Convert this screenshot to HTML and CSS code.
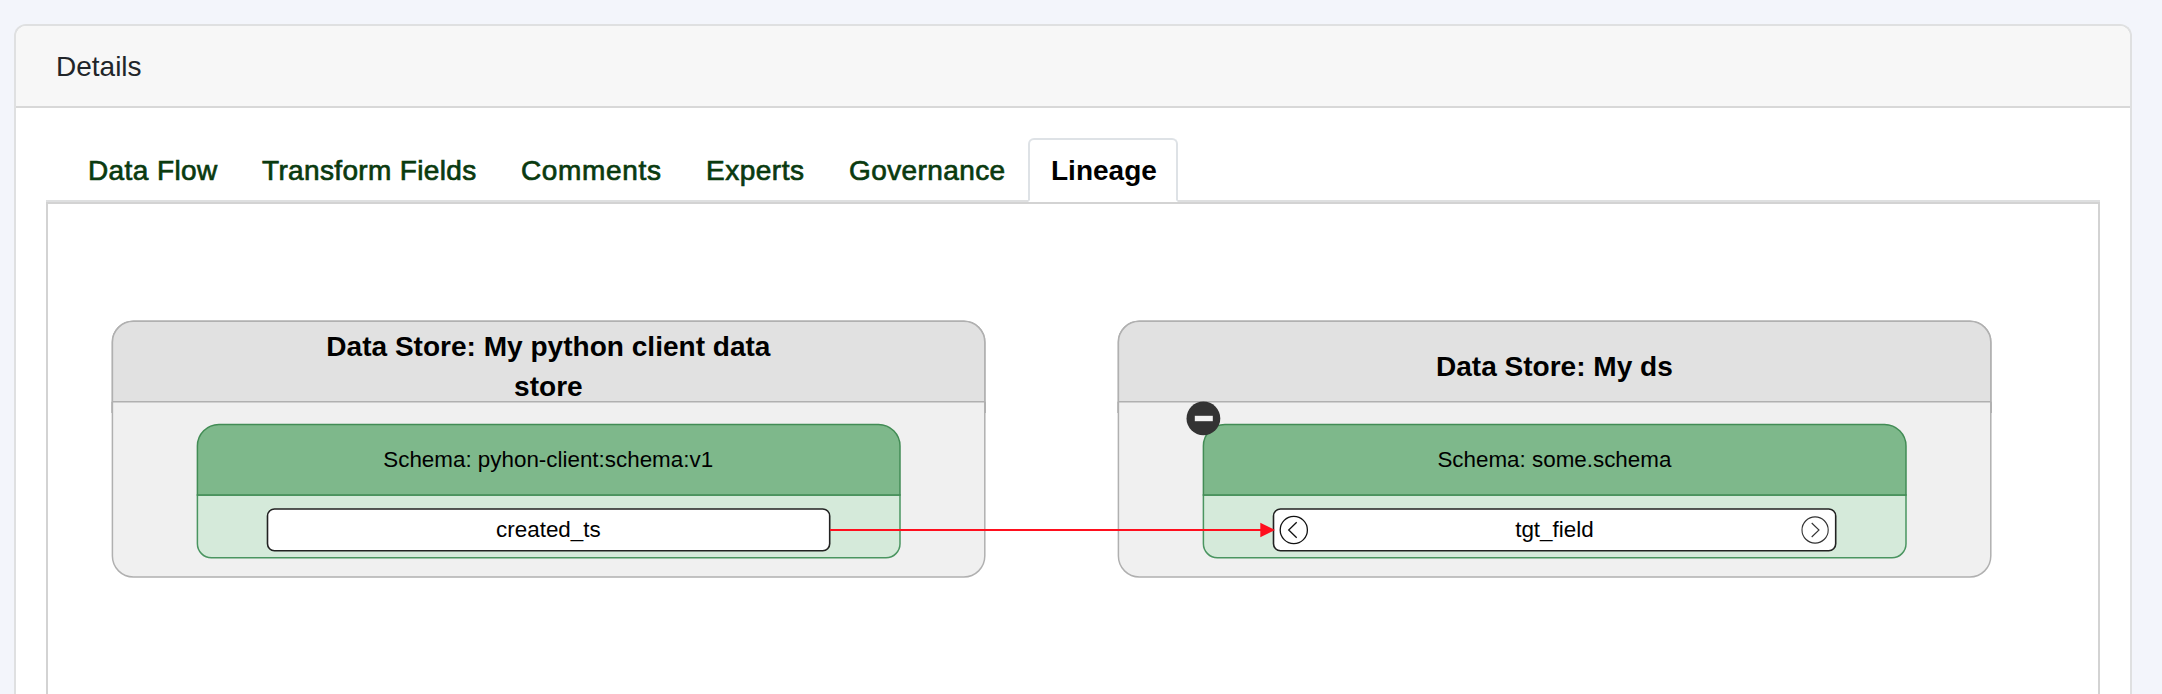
FILE: index.html
```html
<!DOCTYPE html>
<html lang="en">
<head>
<meta charset="utf-8">
<title>Details</title>
<link rel="stylesheet" href="styles.css">
</head>
<body>
<section class="card">
  <header class="card-header">Details</header>
  <div class="card-body">
    <nav class="tabs">
      <a class="tab tab-flow">Data Flow</a>
      <a class="tab tab-fields">Transform Fields</a>
      <a class="tab tab-comments">Comments</a>
      <a class="tab tab-experts">Experts</a>
      <a class="tab tab-governance">Governance</a>
      <a class="tab tab-lineage active">Lineage</a>
    </nav>
    <div class="panel">
      <svg class="graph" viewBox="48 204 2050 490" width="2050" height="490">
        <defs>
          <g id="store">
            <rect class="store-body" x="112.4" y="321.2" width="872.4" height="255.8" rx="21"/>
            <path class="store-head" d="M112.4 401.7V342.2a21 21 0 0 1 21-21H963.8a21 21 0 0 1 21 21V401.7Z"/>
            <path class="store-edge" d="M112 401.7V413M985.2 401.7V413"/>
            <path class="schema-body" d="M197.4 495V543.7a14 14 0 0 0 14 14H886a14 14 0 0 0 14-14V495Z"/>
            <path class="schema-head" d="M197.4 495V446a21.5 21.5 0 0 1 21.5-21.5H878.5a21.5 21.5 0 0 1 21.5 21.5V495Z"/>
            <rect class="field" x="267.5" y="509" width="562.2" height="41.8" rx="7"/>
          </g>
        </defs>
        <use href="#store"/>
        <use href="#store" x="1006"/>
        <text class="title" x="548.4" y="356">Data Store: My python client data</text>
        <text class="title" x="548.4" y="396">store</text>
        <text class="label" x="548.2" y="467">Schema: pyhon-client:schema:v1</text>
        <text class="label" x="548.4" y="537">created_ts</text>
        <text class="title" x="1554.4" y="376">Data Store: My ds</text>
        <text class="label" x="1554.4" y="467">Schema: some.schema</text>
        <text class="label" x="1554.4" y="537">tgt_field</text>
        <path class="link" d="M830 530H1262"/>
        <path class="link-head" d="M1260.3 522.8L1275 530L1260.3 537.2Z"/>
        <circle class="arrow-left" cx="1293.8" cy="530" r="13.6"/>
        <path class="arrow-left" d="M1296.7 522.3L1288.7 530L1296.7 537.7"/>
        <circle class="arrow-right" cx="1815.1" cy="530" r="13.1"/>
        <path class="arrow-right" d="M1811.7 523L1819 530L1811.7 537"/>
        <circle class="collapse" cx="1203.4" cy="418.4" r="16.9"/>
        <rect class="collapse-bar" x="1194.8" y="415.8" width="18" height="5.4"/>
      </svg>
    </div>
  </div>
</section>
</body>
</html>
```
FILE: styles.css
```css
* { box-sizing: border-box; }
body {
  margin: 0;
  height: 694px;
  padding: 24px 30px 0 14px;
  background: #f3f5fb;
  font-family: "Liberation Sans", Arial, sans-serif;
  font-size: 28px;
  color: #212529;
}
.card {
  height: 670px;
  border: 2px solid #dfe0e1;
  border-bottom: 0;
  border-radius: 12px 12px 0 0;
  background: #fff;
  overflow: hidden;
}
.card-header {
  height: 82px;
  padding: 0 40px;
  line-height: 81px;
  background: #f7f7f7;
  border-bottom: 2px solid #d8d8d8;
}
.card-body { padding: 30px 30px 0; }
.tabs {
  display: flex;
  height: 64px;
  padding-left: 20px;
  border-bottom: 2px solid #dedfe0;
}
.tab {
  height: 64px;
  padding-left: 22px;
  line-height: 66px;
  letter-spacing: 0.4px;
  white-space: nowrap;
  color: #0a3a0f;
  -webkit-text-stroke: 0.7px #0a3a0f;
}
.tab-flow { width: 174px; }
.tab-fields { width: 259px; letter-spacing: 0.35px; }
.tab-comments { width: 185px; letter-spacing: 0.65px; }
.tab-experts { width: 143px; letter-spacing: 0.5px; }
.tab-governance { width: 201px; }
.tab-lineage { width: 150px; }
.tab.active {
  padding-left: 21px;
  line-height: 62px;
  letter-spacing: 0;
  color: #000;
  font-weight: bold;
  -webkit-text-stroke: 0;
  background: #fff;
  border: 2px solid #dee2e6;
  border-bottom-color: #fff;
  border-radius: 6px 6px 0 0;
}
.panel { height: 492px; border: 2px solid #d3d3d3; border-bottom: 0; }
.graph { display: block; }
.store-body { fill: #f0f0f0; stroke: #b0b0b0; stroke-width: 1.5; }
.store-head { fill: #e1e1e1; stroke: #b0b0b0; stroke-width: 1.5; }
.store-edge { stroke: #b0b0b0; stroke-width: 1.5; }
.schema-body { fill: #d5eada; stroke: #4a9560; stroke-width: 1.5; }
.schema-head { fill: #7eb88b; stroke: #428c55; stroke-width: 1.5; }
.field { fill: #fff; stroke: #222; stroke-width: 1.6; }
.title { font-size: 28.05px; font-weight: bold; text-anchor: middle; fill: #000; }
.label { font-size: 22.4px; text-anchor: middle; fill: #000; }
.link { stroke: #ff0f1e; stroke-width: 2; }
.link-head { fill: #ff0f1e; }
.arrow-left { fill: none; stroke: #111; stroke-width: 1.3; }
.arrow-right { fill: none; stroke: #333; stroke-width: 1.1; }
.collapse { fill: #333; }
.collapse-bar { fill: #f2f2f2; }
```
